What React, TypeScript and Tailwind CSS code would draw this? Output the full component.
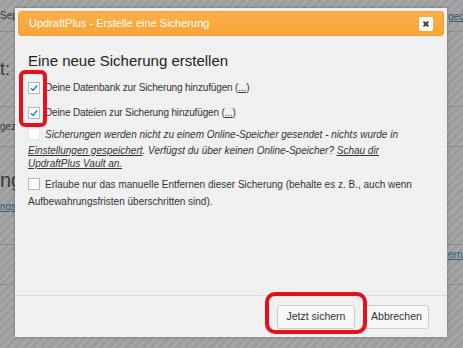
import React from "react";

const Check = ({ checked, faint }: { checked?: boolean; faint?: boolean }) => (
  <span
    className={
      "inline-flex h-[12px] w-[12px] shrink-0 items-center justify-center border bg-white " +
      (faint ? "border-[#e6e6e6] bg-[#f4f4f4]" : "border-[#b4b9be]")
    }
  >
    {checked && (
      <svg viewBox="0 0 12 12" className="h-[10px] w-[10px]">
        <path d="M2.2 6.2 L4.8 8.8 L9.8 3" fill="none" stroke="#1e8cbe" strokeWidth="1.8" />
      </svg>
    )}
  </span>
);

export default function App() {
  return (
    <div
      className="relative h-[348px] w-[463px] overflow-hidden bg-[repeating-linear-gradient(135deg,#a6a6a6_0px,#a6a6a6_3px,#9c9c9c_3px,#9c9c9c_6px)] text-[#333]"
      style={{ fontFamily: '"Liberation Sans", Arial, sans-serif' }}
    >
      {/* Seite im Hintergrund */}
      <div className="flex h-full flex-col text-[#3a3a3a]">
        <div className="h-[32px] border-b border-[#8f8f8f] pt-[8px] text-[10px]">Sep</div>
        <div className="flex h-[75px] items-center border-b border-[#8f8f8f] text-[18px]">t:</div>
        <div className="h-[40px] border-b border-[#8f8f8f] pt-[12px] text-[10px]">gez</div>
        <div className="flex h-[48px] items-end text-[20px]">ng</div>
        <div className="h-[50px] border-b border-[#8f8f8f] pt-[4px] text-[10px] text-[#2a5a7a] underline">ngs</div>
        <div className="h-[40px] border-b border-[#8f8f8f]" />
      </div>
      <div className="absolute left-[448px] top-[9px] text-[10px] text-[#2a5a7a] underline">ged</div>
      <div className="absolute left-[448px] top-[247px] text-[10px] text-[#2a5a7a] underline">ern</div>

      {/* Dialog */}
      <div className="absolute left-[15px] top-[8px] flex h-[329px] w-[432px] flex-col bg-[#f0f0f0] shadow-[0_0_3px_rgba(0,0,0,0.3)]">
        <div className="mx-[3px] mt-[3px] flex h-[25px] items-center justify-between rounded-[3px] border border-[#f0a030] bg-[linear-gradient(#fbb048,#f7a437)] px-[10px]">
          <span className="text-[11px] text-white">UpdraftPlus - Erstelle eine Sicherung</span>
          <span className="flex h-[14px] w-[14px] items-center justify-center rounded-[2px] bg-white">
            <svg viewBox="0 0 10 10" className="h-[8px] w-[8px]">
              <path d="M2 2 L8 8 M8 2 L2 8" stroke="#333" strokeWidth="2.4" />
            </svg>
          </span>
        </div>

        <div className="flex flex-1 flex-col px-[13px] pt-[15px]">
          <h2 className="text-[15px] leading-[20px] text-[#222]">Eine neue Sicherung erstellen</h2>

          <div className="mt-[10px] flex flex-col text-[10px] leading-[13px]">
            <div className="flex items-center gap-[5px]">
              <Check checked />
              <span className="tracking-[-0.15px]">
                Deine Datenbank zur Sicherung hinzufügen (<span className="underline">...</span>)
              </span>
            </div>
            <div className="mt-[12px] flex items-center gap-[5px]">
              <Check checked />
              <span className="tracking-[-0.15px]">
                Deine Dateien zur Sicherung hinzufügen (<span className="underline">...</span>)
              </span>
            </div>
            <div className="mt-[9px] italic leading-[13.5px]">
              <span className="mr-[5px] inline-block align-[-2px]">
                <Check faint />
              </span>
              Sicherungen werden nicht zu einem Online-Speicher gesendet - nichts wurde in
              <br />
              <span className="underline">Einstellungen gespeichert</span>. Verfügst du über keinen Online-Speicher?{" "}
              <span className="underline">Schau dir</span>
              <br />
              <span className="underline">UpdraftPlus Vault an.</span>
            </div>
            <div className="mt-[6px] leading-[15px]">
              <span className="mr-[5px] inline-block align-[-2px]">
                <Check />
              </span>
              Erlaube nur das manuelle Entfernen dieser Sicherung (behalte es z. B., auch wenn
              <br />
              Aufbewahrungsfristen überschritten sind).
            </div>
          </div>
        </div>

        <div className="flex h-[42px] items-center justify-end gap-[9px] border-t border-[#dcdcdc] pr-[18px]">
          <button className="h-[24px] w-[78px] rounded-[3px] border border-[#ccc] bg-[#f7f7f7] text-[10.5px] text-[#333]">
            Jetzt sichern
          </button>
          <button className="h-[24px] w-[65px] rounded-[3px] border border-[#ccc] bg-[#f7f7f7] text-[10.5px] text-[#333]">
            Abbrechen
          </button>
        </div>
      </div>

      {/* rote Markierungen */}
      <div className="absolute left-[19px] top-[70px] h-[57px] w-[28px] rounded-[6px] border-[4px] border-[#e8101a]" />
      <div className="absolute left-[265px] top-[292px] h-[42px] w-[102px] rounded-[10px] border-[4px] border-[#e8101a]" />
    </div>
  );
}
